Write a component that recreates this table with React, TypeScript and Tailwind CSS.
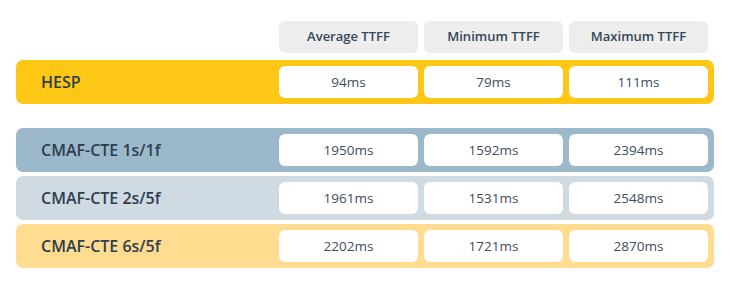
const columns = ['Average TTFF', 'Minimum TTFF', 'Maximum TTFF']

const rows = [
  { name: 'HESP', values: ['94ms', '79ms', '111ms'], bg: 'bg-[#fec715]' },
  { name: 'CMAF-CTE 1s/1f', values: ['1950ms', '1592ms', '2394ms'], bg: 'bg-[#9cb9cb]' },
  { name: 'CMAF-CTE 2s/5f', values: ['1961ms', '1531ms', '2548ms'], bg: 'bg-[#d0dae2]' },
  { name: 'CMAF-CTE 6s/5f', values: ['2202ms', '1721ms', '2870ms'], bg: 'bg-[#ffdc8f]' },
]

function Row({ row }: { row: (typeof rows)[number] }) {
  return (
    <div className={`grid grid-cols-[251px_139px_139px_139px] gap-[6px] p-[6px] rounded-[7px] ${row.bg}`}>
      <div className="flex items-center pl-[19px] text-[16px] font-semibold text-[#2d3e50]">
        {row.name}
      </div>
      {row.values.map((v, i) => (
        <div
          key={i}
          className="h-[32px] flex items-center justify-center rounded-[6px] bg-white text-[13.5px] text-[#3d4d5e]"
        >
          {v}
        </div>
      ))}
    </div>
  )
}

export default function App() {
  return (
    <div
      className="w-[731px] h-[284px] bg-white pl-[16px] pt-[21px]"
      style={{ fontFamily: '"Open Sans", sans-serif' }}
    >
      <div className="w-[698px]">
        {/* column headers */}
        <div className="grid grid-cols-[251px_139px_139px_139px] gap-[6px] px-[6px]">
          <div />
          {columns.map(c => (
            <div
              key={c}
              className="h-[32px] flex items-center justify-center rounded-[6px] bg-[#ededed] text-[13px] font-semibold text-[#34465a]"
            >
              {c}
            </div>
          ))}
        </div>

        <div className="mt-[7px]">
          <Row row={rows[0]} />
        </div>

        <div className="mt-[24px] flex flex-col gap-[4px]">
          {rows.slice(1).map(r => (
            <Row key={r.name} row={r} />
          ))}
        </div>
      </div>
    </div>
  )
}
